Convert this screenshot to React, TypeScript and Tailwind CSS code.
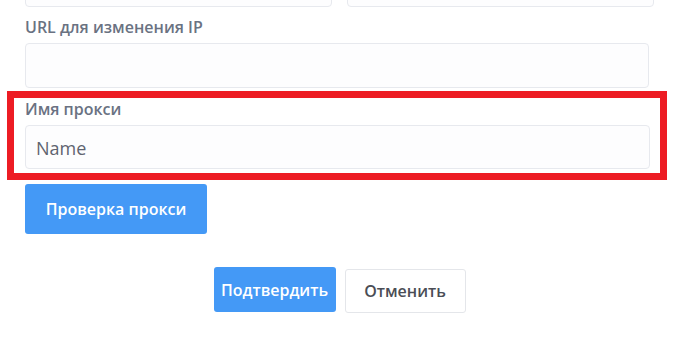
export default function App() {
  const font = { fontFamily: '"Open Sans", "Noto Sans", sans-serif' };

  return (
    <div className="w-[679px] h-[341px] overflow-hidden bg-white" style={font}>
      <div className="mt-[-37px] flex flex-col">
        {/* top row, cut off by the window */}
        <div className="flex gap-[15px] pl-[25px]">
          <div className="h-[44px] w-[307px] rounded-[4px] border border-[#e7e9ee] bg-[#fdfdfe]" />
          <div className="h-[44px] w-[307px] rounded-[4px] border border-[#e7e9ee] bg-[#fdfdfe]" />
        </div>

        {/* URL for IP change */}
        <label className="mt-[10px] ml-[25px] text-[16px] leading-[20px] font-semibold text-[#6a7282]">
          URL для изменения IP
        </label>
        <div className="mt-[6px] ml-[25px] h-[45px] w-[624px] rounded-[4px] border border-[#e7e9ee] bg-[#fdfdfe]" />

        {/* highlighted proxy name */}
        <div className="mt-[3px] ml-[7px] w-[660px] border-[7px] border-[#ed1c24] pt-[1px] pl-[11px] pr-[10px] pb-[4px]">
          <label className="block text-[16px] leading-[20px] font-semibold text-[#6a7282]">Имя прокси</label>
          <div className="mt-[6px] flex h-[44px] items-center rounded-[4px] border border-[#e7e9ee] bg-[#fdfdfe] pl-[10px]">
            <span className="mt-[2px] text-[18px] leading-[24px] text-[#5f6470]">Name</span>
          </div>
        </div>

        <button className="mt-[4px] ml-[25px] h-[50px] w-[182px] rounded-[3px] bg-[#4499f6] text-[16px] font-semibold text-white">
          Проверка прокси
        </button>

        <div className="mt-[33px] flex items-start justify-center gap-[9px]">
          <button className="h-[45px] w-[122px] rounded-[3px] bg-[#4499f6] text-[16px] font-semibold text-white">
            Подтвердить
          </button>
          <button className="mt-[2px] h-[44px] w-[121px] rounded-[3px] border border-[#e4e6ea] bg-white text-[16px] font-semibold text-[#4a4d55]">
            Отменить
          </button>
        </div>
      </div>
    </div>
  );
}
